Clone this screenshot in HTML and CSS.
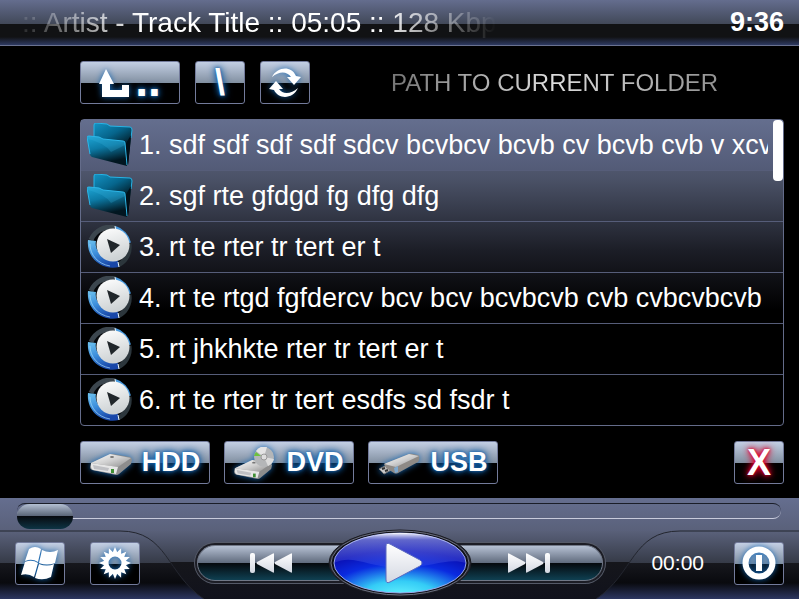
FILE: index.html
```
<!DOCTYPE html>
<html lang="en">
<head>
	<meta charset="UTF-8">
	<title>player - browser</title>
	<link rel="stylesheet" href="styles.css">
</head>
<body>

<!-- shared icons -->
<svg class="defs" width="0" height="0" aria-hidden="true">
	<defs>
		<linearGradient id="fback" x1="0" y1="0" x2="0.5" y2="1">
			<stop offset="0" stop-color="#1493c4"/><stop offset="0.4" stop-color="#06658c"/><stop offset="0.9" stop-color="#000"/>
		</linearGradient>
		<linearGradient id="ffront" x1="0" y1="0" x2="0.3" y2="1">
			<stop offset="0" stop-color="#1fa6d6"/><stop offset="0.45" stop-color="#0c7aa5"/><stop offset="0.95" stop-color="#011620"/>
		</linearGradient>
		<linearGradient id="disc" x1="0" y1="0" x2="0.3" y2="1">
			<stop offset="0" stop-color="#fff"/><stop offset="1" stop-color="#cdd2d4"/>
		</linearGradient>
		<linearGradient id="blue" x1="0" y1="0" x2="0.4" y2="1">
			<stop offset="0" stop-color="#6fc4f0"/><stop offset="0.5" stop-color="#3d8fdc"/><stop offset="1" stop-color="#1846a8"/>
		</linearGradient>
		<linearGradient id="metal" x1="0" y1="0" x2="1" y2="1">
			<stop offset="0" stop-color="#fff"/><stop offset="0.5" stop-color="#d0d0d0"/><stop offset="1" stop-color="#8c8c8c"/>
		</linearGradient>
		<linearGradient id="white" x1="0" y1="0" x2="0" y2="1">
			<stop offset="0" stop-color="#fff"/><stop offset="1" stop-color="#d4d8e2"/>
		</linearGradient>

		<symbol id="folder" viewBox="0 0 46 44">
			<path d="M7 2 Q7 0 9 0 L20 1 L23 3 L43 4 Q45 4 45 7 L41 42 L37 40 L7 20 Z" fill="url(#fback)"/>
			<path d="M7 13 L7 2 Q7 0 9 0 L20 1 L23 3 L43 4 Q45 4 45 7 L44 15" fill="none" stroke="#27b4e6"/>
			<path d="M38 22 L44 12 L41 42 Z" fill="#021019"/>
			<path d="M0 14 Q0 13 2 13 L12 14 L16 16 L36 18 Q38 18 38 20 L40 43 L5 34 Q3 33 3 31 Z" fill="url(#ffront)"/>
			<path d="M1 16 Q18 20 24 29 L38 22 L38 20 Q38 18 36 18 L16 16 L12 14 L2 13 Z" fill="#37b4df" opacity="0.25"/>
			<path d="M3 31 L0 14 Q0 13 2 13 L12 14 L16 16 L36 18 Q38 18 38 20 L40 42" fill="none" stroke="#2db6e8"/>
		</symbol>

		<symbol id="song" viewBox="0 0 44 44">
			<circle cx="22" cy="22" r="20" fill="#05070a"/>
			<path d="M3 15 A20 20 0 0 1 27 3" fill="none" stroke="#3c464e" stroke-width="5"/>
			<path d="M27 3 A20 20 0 0 1 41 18" fill="none" stroke="#4a9bdf" stroke-width="4"/>
			<path d="M41 19 A20 20 0 0 1 30 40" fill="none" stroke="#2c363c" stroke-width="5"/>
			<path d="M0 15 L8 16 C6 25 14 35 30 36 L31 42 C15 46 -2 34 0 15 Z" fill="url(#blue)"/>
			<path d="M2 19 C2 30 10 39 22 41" fill="none" stroke="#a5dcfa" opacity="0.7"/>
			<path d="M27 1 L28 6 M30 37 L31 42" stroke="#e8f4fb"/>
			<circle cx="25" cy="20" r="16.5" fill="url(#disc)"/>
			<path d="M19 14 L32 20 L23 28 Z" fill="#20262a"/>
		</symbol>

		<symbol id="drive" viewBox="0 0 42 21">
			<path d="M1 9 L19 1 Q21 0 23 0 L40 3 Q42 4 42 6 L41 10 L29 20 Q28 21 26 21 L2 16 Q0 15 0 13 Z" fill="#8d8d8d"/>
			<path d="M1 9 L20 0 L41 4 L28 13 Z" fill="url(#metal)"/>
			<path d="M1 9 L28 13 L26 20 L3 16 Q1 15 1 13 Z" fill="#e6e6e6"/>
			<path d="M3 11 L19 14 L18 17 L4 15 Z" fill="#bfc0c4"/>
			<path d="M21 15 h3 v4 h-3 Z" fill="#3e8f34"/>
			<ellipse cx="22" cy="3" rx="2" ry="1" fill="#777"/>
		</symbol>
	</defs>
</svg>

<header class="header">
	<div class="track">:: Artist - Track Title :: 05:05 :: 128 Kbps</div>
	<time class="clock">9:36</time>
</header>

<main class="main">

	<div class="bar">
		<button class="btn up" aria-label="Up one folder">
			<svg width="30" height="28" viewBox="0 0 30 28"><path d="M7 0 L15 15 H11 V21 H23 V16 H30 V28 H3 V15 H0 Z" fill="#fff"/></svg>
			<span class="dots">..</span>
		</button>
		<button class="btn square slash">\</button>
		<button class="btn square" aria-label="Refresh">
			<svg width="34" height="30" viewBox="0 0 34 30" fill="#fff">
				<path d="M4 9 C9 -1 23 -3 28 8 L33 9 L26 17 L19 9 L23 9 C19 3 11 3 4 9 Z"/>
				<path d="M30 20 C25 31 11 32 6 22 L1 21 L8 13 L15 21 L11 21 C15 27 23 26 30 20 Z"/>
			</svg>
		</button>
		<h1 class="path">PATH TO CURRENT FOLDER</h1>
	</div>

	<div class="browser">
		<ul class="list">
			<li><button class="row active"><svg class="icon"><use href="#folder"/></svg><span>1. sdf sdf sdf sdf sdcv bcvbcv bcvb cv bcvb cvb v xcv</span></button></li>
			<li><button class="row"><svg class="icon"><use href="#folder"/></svg><span>2. sgf rte gfdgd fg dfg dfg</span></button></li>
			<li><button class="row"><svg class="icon"><use href="#song"/></svg><span>3. rt te rter tr tert er t</span></button></li>
			<li><button class="row"><svg class="icon"><use href="#song"/></svg><span>4. rt te rtgd fgfdercv bcv bcv bcvbcvb cvb cvbcvbcvb</span></button></li>
			<li><button class="row"><svg class="icon"><use href="#song"/></svg><span>5. rt jhkhkte rter tr tert er t</span></button></li>
			<li><button class="row"><svg class="icon"><use href="#song"/></svg><span>6. rt te rter tr tert esdfs sd fsdr t</span></button></li>
		</ul>
		<div class="scroll"></div>
	</div>

	<div class="bar drives">
		<button class="btn drive">
			<svg width="42" height="32" viewBox="0 0 42 32"><use href="#drive" y="7" width="42" height="21"/></svg>HDD
		</button>
		<button class="btn drive">
			<svg width="42" height="32" viewBox="0 0 42 32">
				<use href="#drive" x="0" y="13" width="38" height="19"/>
				<circle cx="30" cy="10" r="10" fill="#b4b6b8"/>
				<path d="M30 10 L22 4 A10 10 0 0 1 33 0 Z" fill="#e4e4e4"/>
				<path d="M30 10 L40 12 A10 10 0 0 1 34 19 Z" fill="#dcdcdc"/>
				<path d="M27 9 L20 9 A10 10 0 0 1 22 5 Z" fill="#6cc23c"/>
				<circle cx="30" cy="10" r="3" fill="#ddd" stroke="#999"/>
			</svg>DVD
		</button>
		<button class="btn drive">
			<svg width="42" height="32" viewBox="0 0 42 32">
				<path d="M1 22 L9 18 L15 22 L6 27 Z" fill="#c9c9c9" stroke="#777"/>
				<path d="M4 22 l3 -1 M7 24 l3 -1" stroke="#333" stroke-width="2"/>
				<path d="M6 17 L31 7 Q33 6 35 7 L40 8 Q42 9 41 13 L40 15 L20 26 Q18 27 16 26 L8 21 Z" fill="#8e8a86"/>
				<path d="M6 17 L31 7 L41 9 L18 20 Z" fill="url(#metal)"/>
				<path d="M16 21 L20 19 L20 25 L17 26 Z" fill="#7fa9cf"/>
			</svg>USB
		</button>
		<button class="btn square close" aria-label="Close">X</button>
	</div>

</main>

<footer class="footer">
	<svg class="shape" viewBox="0 0 799 101" preserveAspectRatio="none" aria-hidden="true">
		<defs>
			<linearGradient id="tab" x1="0" y1="0" x2="0" y2="1">
				<stop offset="0" stop-color="#596079"/><stop offset="0.46" stop-color="#363b48"/>
				<stop offset="0.46" stop-color="#15161b"/><stop offset="1" stop-color="#11121c"/>
			</linearGradient>
		</defs>
		<path d="M120 33 C168 33 166 76 204 101 H596 C634 76 632 33 680 33 Z" fill="url(#tab)"/>
		<path d="M0 33 H120 C168 33 166 76 204 101 M596 101 C634 76 632 33 680 33 H799" fill="none" stroke="#23262f"/>
	</svg>

	<input class="seek" type="range" min="0" max="100" value="0" aria-label="Position">

	<div class="controls">
		<div class="side">
			<button class="btn square" aria-label="Windows">
				<svg width="38" height="34" viewBox="0 0 38 34" fill="#fff">
					<path d="M8 3 Q14 -1 20 3 L17 16 Q11 12 4 15 Z"/>
					<path d="M21 4 Q29 8 37 4 L34 17 Q26 20 18 17 Z"/>
					<path d="M4 16 Q11 13 17 17 L13 31 Q7 27 0 29 Z"/>
					<path d="M18 18 Q26 21 33 18 L30 31 Q22 35 14 32 Z"/>
				</svg>
			</button>
			<button class="btn square" aria-label="Settings">
				<svg width="32" height="34" viewBox="-16 -17 32 34">
					<circle r="8.5" fill="none" stroke="#fff" stroke-width="4"/>
					<g fill="#fff">
						<path id="ray" d="M-3 -9 L0 -16 L3 -9 Z"/>
						<use href="#ray" transform="rotate(22.5)"/><use href="#ray" transform="rotate(45)"/><use href="#ray" transform="rotate(67.5)"/>
						<use href="#ray" transform="rotate(90)"/><use href="#ray" transform="rotate(112.5)"/><use href="#ray" transform="rotate(135)"/>
						<use href="#ray" transform="rotate(157.5)"/><use href="#ray" transform="rotate(180)"/><use href="#ray" transform="rotate(202.5)"/>
						<use href="#ray" transform="rotate(225)"/><use href="#ray" transform="rotate(247.5)"/><use href="#ray" transform="rotate(270)"/>
						<use href="#ray" transform="rotate(292.5)"/><use href="#ray" transform="rotate(315)"/><use href="#ray" transform="rotate(337.5)"/>
					</g>
				</svg>
			</button>
		</div>

		<div class="transport">
			<button class="skip prev" aria-label="Previous">
				<svg width="44" height="20" viewBox="0 0 44 20" fill="url(#white)">
					<rect x="1" width="5" height="20" rx="2"/>
					<path d="M25 1 V19 Q25 20 24 19.500 L8 11 Q7 10 8 9 L24 0.500 Q25 0 25 1 Z"/>
					<path d="M43 1 V19 Q43 20 42 19.500 L26 11 Q25 10 26 9 L42 0.500 Q43 0 43 1 Z"/>
				</svg>
			</button>
			<button class="play" aria-label="Play">
				<svg width="144" height="68" viewBox="0 0 144 68">
					<defs>
						<radialGradient id="orb" cx="0.5" cy="1.1" r="1">
							<stop offset="0" stop-color="#6ffaff"/><stop offset="0.3" stop-color="#34ccf6"/>
							<stop offset="0.58" stop-color="#0a2be0"/><stop offset="0.8" stop-color="#0a10b4"/><stop offset="1" stop-color="#1418a0"/>
						</radialGradient>
						<linearGradient id="gloss" x1="0" y1="0" x2="0" y2="1">
							<stop offset="0" stop-color="#fff" stop-opacity="0.95"/><stop offset="0.2" stop-color="#c0c8ff" stop-opacity="0.45"/>
							<stop offset="1" stop-color="#7f8cff" stop-opacity="0.12"/>
						</linearGradient>
					</defs>
					<ellipse cx="72" cy="34" rx="71" ry="33" fill="#2a2c36" stroke="#1a1b22"/>
					<ellipse cx="72" cy="34" rx="69" ry="32" fill="#101118" stroke="#6d7080"/>
					<ellipse cx="72" cy="34" rx="66" ry="30" fill="url(#orb)" stroke="#9aa6e8"/>
					<path d="M6 34 C8 -6 136 -6 138 34 C118 28 102 40 72 38 C42 40 26 24 6 34 Z" fill="url(#gloss)"/>
					<path d="M58 17 Q58 13 62 15 L92 31 Q96 34 92 37 L62 53 Q58 55 58 51 Z" fill="url(#white)" stroke="#5a68c0"/>
				</svg>
			</button>
			<button class="skip next" aria-label="Next">
				<svg width="44" height="20" viewBox="0 0 44 20" fill="url(#white)">
					<path d="M1 1 V19 Q1 20 2 19.500 L18 11 Q19 10 18 9 L2 0.500 Q1 0 1 1 Z"/>
					<path d="M19 1 V19 Q19 20 20 19.500 L36 11 Q37 10 36 9 L20 0.500 Q19 0 19 1 Z"/>
					<rect x="38" width="5" height="20" rx="2"/>
				</svg>
			</button>
		</div>

		<div class="side right">
			<time class="elapsed">00:00</time>
			<button class="btn square" aria-label="Power">
				<svg width="34" height="34" viewBox="0 0 34 34">
					<circle cx="17" cy="17" r="13.500" fill="none" stroke="#fff" stroke-width="6"/>
					<rect x="14" y="9" width="6" height="16" fill="#fff"/>
				</svg>
			</button>
		</div>
	</div>
</footer>

</body>
</html>
```
FILE: styles.css
```
* {
	box-sizing: border-box;
}
body {
	display: flex;
	flex-direction: column;
	min-height: 100vh;
	margin: 0;
	background-color: #000;
}
body,
button {
	color: #fff;
	font-family: "Liberation Sans", Arial, sans-serif;
	font-size: 27px;
}
button {
	margin: 0;
	padding: 0;
	border: 0;
	background: none;
	cursor: pointer;
}
svg {
	display: block;
	flex: none;
}
.defs {
	position: absolute;
}

/* top */
.header {
	display: flex;
	justify-content: space-between;
	align-items: center;
	height: 46px;
	padding: 0 15px 0 22px;
	border-bottom: 1px solid #6a7290;
	background: linear-gradient(#646d8e 0, #414858 24px, #111214 24px, #111214 37px, #2e3a62 45px);
}
.track {
	width: 510px;
	white-space: nowrap;
	font-size: 28px;
	-webkit-mask-image: linear-gradient(90deg, rgba(0,0,0,.1), #000 24%, #000 70%, transparent 93%);
	mask-image: linear-gradient(90deg, rgba(0,0,0,.1), #000 24%, #000 70%, transparent 93%);
}
.clock {
	font-weight: bold;
}

/* browser */
.main {
	flex: 1;
	display: flex;
	flex-direction: column;
	gap: 15px;
	padding: 15px 15px 14px 80px;
}
.bar {
	display: flex;
	align-items: center;
	gap: 15px;
}
.btn {
	display: flex;
	justify-content: center;
	align-items: center;
	height: 43px;
	border: 1px solid #737b9b;
	border-radius: 3px;
	background: linear-gradient(#c3cfe4, #8391a2 50%, #000 50%);
	font-weight: bold;
	text-shadow: 0 0 3px #1668b4, 0 0 6px #1668b4, 0 0 9px #0c4a88;
}
.btn svg {
	filter: drop-shadow(0 0 3px #1668b4);
}
.square {
	width: 50px;
}
.up {
	gap: 6px;
	width: 100px;
}
.dots {
	padding-bottom: 6px;
	font-size: 46px;
	line-height: 28px;
}
.slash,
.close {
	font-size: 36px;
	line-height: 36px;
}
.path {
	flex: 1;
	margin: 0;
	text-align: center;
	font-size: 24px;
	line-height: 24px;
	font-weight: normal;
	background: linear-gradient(90deg, #777 15%, #ddd 50%, #888 90%);
	-webkit-background-clip: text;
	background-clip: text;
	color: transparent;
}
.browser {
	position: relative;
	border: 1px solid #646c8a;
	border-radius: 4px;
	background: linear-gradient(#656e8d, #4a5166 60px, #1c1e27 130px, #000 190px);
}
.list {
	margin: 0;
	padding: 0;
	list-style: none;
}
.list li + li {
	border-top: 1px solid #565d79;
}
.row {
	display: flex;
	align-items: center;
	gap: 6px;
	width: 100%;
	height: 50px;
	padding: 0 15px 0 6px;
	text-align: left;
}
.row span {
	flex: 1;
	overflow: hidden;
	white-space: nowrap;
}
.active {
	background: linear-gradient(#646e8e, #535b77);
}
.icon {
	width: 46px;
	height: 44px;
}
.scroll {
	position: absolute;
	top: 0;
	right: 0;
	width: 10px;
	height: 61px;
	border-radius: 4px;
	background-color: #fff;
}
.drives {
	gap: 14px;
}
.drive {
	gap: 10px;
	width: 130px;
}
.close {
	margin-left: auto;
	text-shadow: 0 0 3px #e0002c, 0 0 6px #e0002c, 0 0 10px #e0002c;
}

/* bottom */
.footer {
	position: relative;
	background: linear-gradient(#656e8f 0, #596079 34%, #363b48 64%, #17181e 64%, #090a0e 84%, #2c3660);
}
.shape {
	position: absolute;
	top: 0;
	left: 0;
	width: 100%;
	height: 100%;
}
.seek {
	-webkit-appearance: none;
	appearance: none;
	position: relative;
	display: block;
	width: calc(100% - 35px);
	height: 25px;
	margin: 0 18px 0 17px;
	background: none;
}
.seek::-webkit-slider-runnable-track {
	display: flex;
	align-items: center;
	height: 16px;
	border-top: 1px solid #1a1d28;
	border-bottom: 1px solid #c8cbdc;
	border-radius: 8px;
}
.seek::-webkit-slider-thumb {
	-webkit-appearance: none;
	flex: none;
	width: 56px;
	height: 25px;
	border-radius: 13px;
	background: linear-gradient(#b3bfd2, #566072 50%, #080b10 50%, #0d3444);
}
.controls {
	position: relative;
	display: grid;
	grid-template-columns: 1fr auto 1fr;
	align-items: center;
	padding: 6px 15px 2px;
}
.side {
	display: flex;
	align-items: center;
	gap: 25px;
}
.right {
	justify-content: flex-end;
	gap: 30px;
}
.elapsed {
	font-size: 21px;
}
.transport {
	display: flex;
	align-items: center;
}
.skip {
	display: flex;
	justify-content: center;
	align-items: center;
	width: 148px;
	height: 36px;
	border: 1px solid #717887;
	background: linear-gradient(#b6c1d4, #5f6a7c 50%, #05080c 50%, #0f4052);
	box-shadow: 0 0 0 2px #1c1d25, 0 0 0 3px #555a68;
}
.prev {
	border-radius: 18px 0 0 18px;
}
.next {
	border-radius: 0 18px 18px 0;
}
.play {
	position: relative;
	margin: 0 -17px;
}
```
